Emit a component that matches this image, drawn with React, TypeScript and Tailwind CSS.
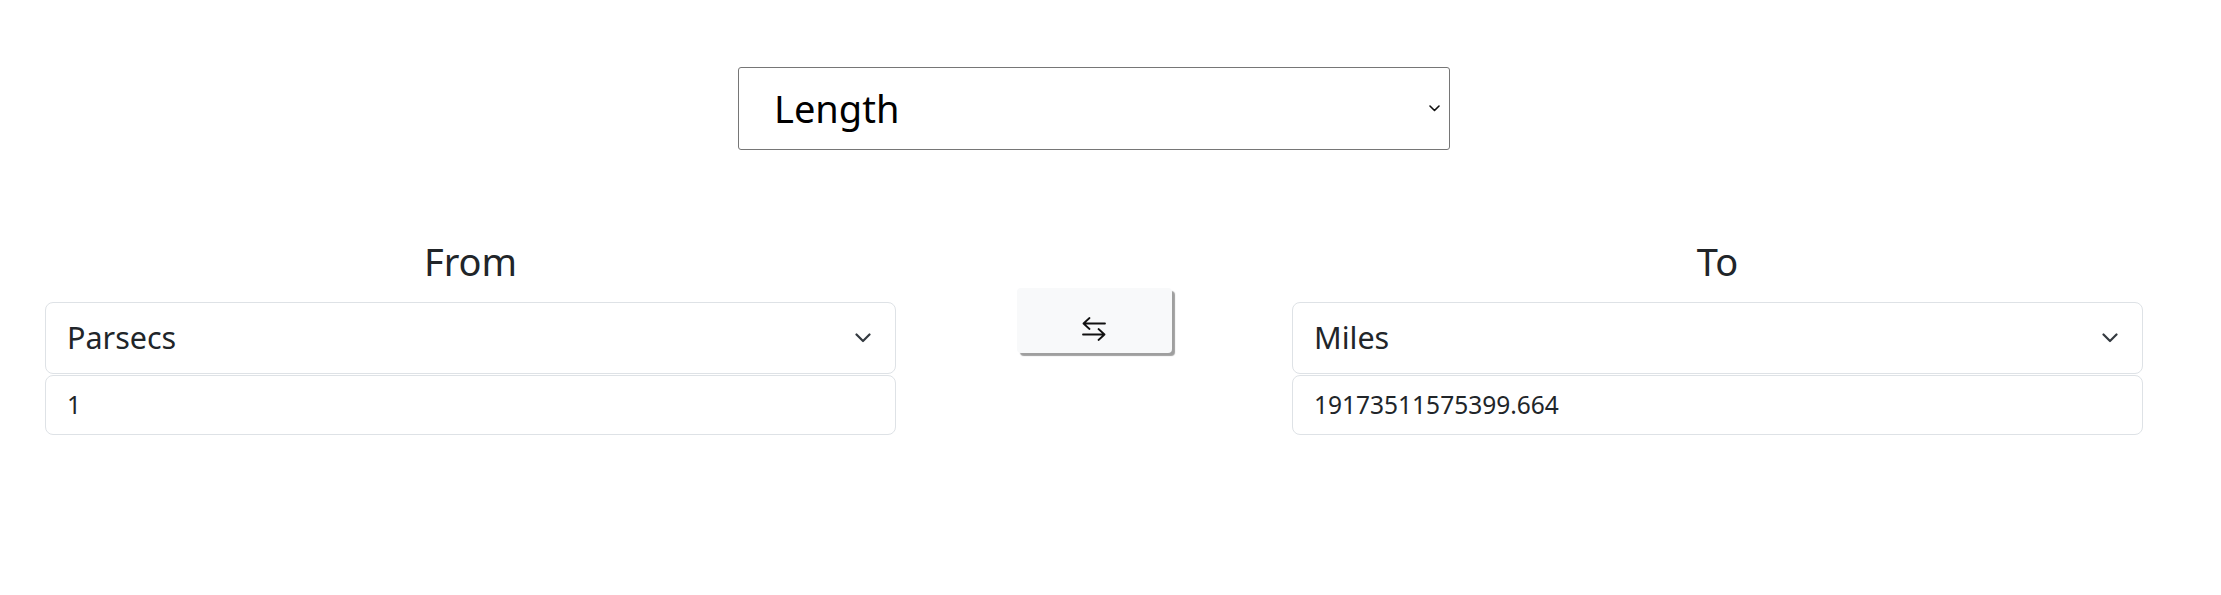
import React from "react";

function BsChevron() {
  return (
    <svg width="16" height="10" viewBox="0 0 16 10" fill="none">
      <path d="M1.5 1.5 L8 8 L14.5 1.5" stroke="#343a40" strokeWidth="2.2" strokeLinecap="round" strokeLinejoin="round" />
    </svg>
  );
}

function NativeChevron() {
  return (
    <svg width="11" height="7" viewBox="0 0 11 7" fill="none">
      <path d="M1 1 L5.5 5.5 L10 1" stroke="#111" strokeWidth="1.6" strokeLinecap="round" strokeLinejoin="round" />
    </svg>
  );
}

function SwapIcon() {
  return (
    <svg width="24" height="25" viewBox="0 0 24 25" fill="none">
      <path d="M1.5 6.5 H23 M1.5 6.5 L7.5 1 M1.5 6.5 L7.5 12" stroke="#111" strokeWidth="1.8" strokeLinecap="round" strokeLinejoin="round" />
      <path d="M1 17.5 H22.5 M22.5 17.5 L16.5 12 M22.5 17.5 L16.5 23" stroke="#111" strokeWidth="1.8" strokeLinecap="round" strokeLinejoin="round" />
    </svg>
  );
}

function Column({ label, unit, value }: { label: string; unit: string; value: string }) {
  return (
    <div className="w-[851px]">
      <div className="h-[48px] text-center text-[38px] leading-[48px] text-[#212529]">{label}</div>
      <div className="mt-[17px] h-[72px] border border-[#dee2e6] rounded-[8px] flex items-center justify-between pl-[21px] pr-[24px] text-[30.5px] text-[#212529]">
        <span>{unit}</span>
        <BsChevron />
      </div>
      <div className="mt-[1px] h-[60px] border border-[#dee2e6] rounded-[8px] flex items-center pl-[21px] text-[24.5px] text-[#212529]">
        {value}
      </div>
    </div>
  );
}

export default function App() {
  return (
    <div className="w-[2221px] h-[595px] bg-white font-['Noto_Sans',sans-serif] overflow-hidden">
      <div className="ml-[45px] w-[2098px] pt-[67px]">
        <div className="mx-auto w-[712px] h-[83px] border border-[#767676] rounded-[3px] flex items-center justify-between pl-[35px] pr-[9px] text-[38px] text-black">
          <span>Length</span>
          <NativeChevron />
        </div>
        <div className="mt-[87px] flex">
          <Column label="From" unit="Parsecs" value="1" />
          <div className="w-[396px] flex justify-center pt-[51px]">
            <div className="w-[155px] h-[65px] bg-[#f8f9fa] rounded-[4px] shadow-[3px_3px_1px_#9f9f9f] flex justify-center pt-[29px]">
              <SwapIcon />
            </div>
          </div>
          <Column label="To" unit="Miles" value="19173511575399.664" />
        </div>
      </div>
    </div>
  );
}
